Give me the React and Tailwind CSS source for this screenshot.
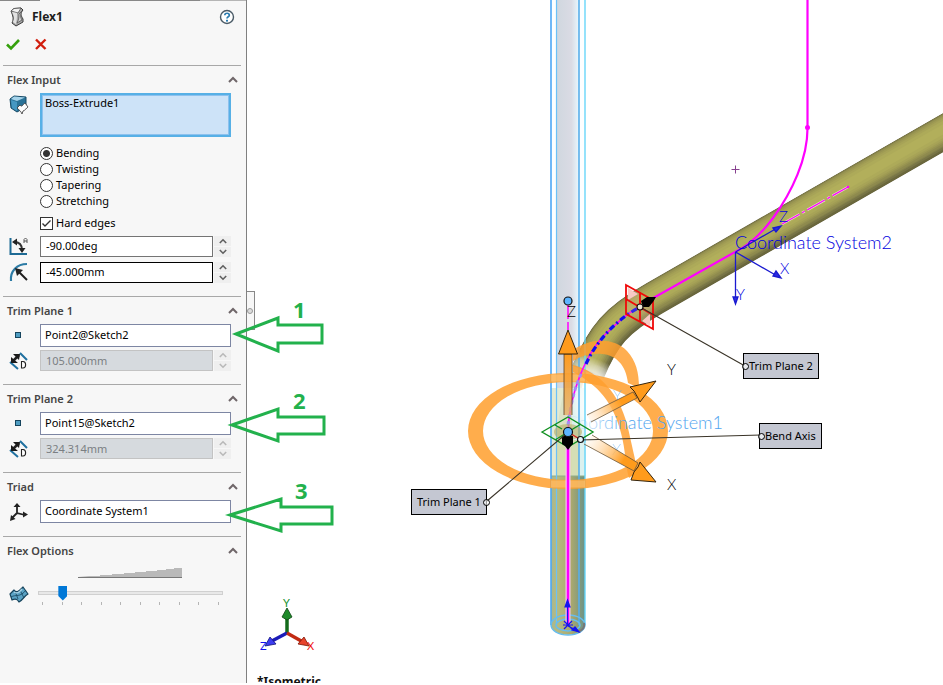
import { useState } from 'react';

const Chevron = ({ className = '', down = false }) => (
    <svg viewBox="0 0 10 7" className={className} fill="none" stroke="currentColor" strokeWidth="2">
        <path d={down ? 'M1 1 L5 5 L9 1' : 'M1 6 L5 2 L9 6'} />
    </svg>
);

const FlexIcon = () => (
    <svg viewBox="0 0 16 20" className="w-4 h-5" strokeLinejoin="round">
        <path d="M2 4 L5 1.500 L12 1 L14 3 C11 6 12 9 14 12 L14 15 L7 19 L3 16 C5 12 4 9 2 4Z" fill="#a9a9a9" stroke="#3a3a3a" />
        <path d="M2 4 L5 1.500 L12 1 L9 6Z" fill="#f2f2f2" stroke="#555" strokeWidth="0.8" />
        <path d="M3 5 L8 6 C8 9 8 12 7 17 L4 15 C6 11 5 9 3 5Z" fill="#e2e2e2" />
        <path d="M10 7 L13 4 C11 7 11 10 13 13 L8 16 C10 12 10 10 10 7Z" fill="#cfcfcf" stroke="#555" strokeWidth="0.8" />
    </svg>
);

const HelpIcon = () => (
    <svg viewBox="0 0 16 16" className="w-4 h-4" fill="none">
        <circle cx="8" cy="8" r="6.5" fill="#fff" stroke="#4a5a66" strokeWidth="1.4" />
        <path d="M5.8 6.2 C5.8 3.6 10.3 3.6 10.3 6.2 C10.3 7.8 8 7.8 8 9.6" stroke="#2b7cb0" strokeWidth="1.7" />
        <rect x="7" y="10.8" width="2" height="1.8" fill="#2b7cb0" />
    </svg>
);

const BodyIcon = () => (
    <svg viewBox="0 0 20 20" className="w-5 h-5 mt-0.5" strokeLinejoin="round">
        <path d="M1 4 L5 1 L17 2 L17 12 L8 17 L2 13Z" fill="#2a7398" stroke="#174a66" />
        <path d="M2 4 L5 1.500 L16 2.500 L8 6Z" fill="#a5d3ea" />
        <path d="M2 5 L8 7 L8 16 L3 13Z" fill="#4698c2" />
        <path d="M8 13 L11 10 C13 13 14 9 16 8 L19 12 C17 13 17 15 14 16 L13 19 C12 16 10 15 8 13Z" fill="#fff" stroke="#333" strokeWidth="0.8" />
    </svg>
);

const AngleIcon = () => (
    <svg viewBox="0 0 20 20" className="w-5 h-5" fill="none">
        <path d="M1.5 2 V18 H18" stroke="#1d6a94" strokeWidth="2" />
        <path d="M5 6 C10 6 13 9 13 14" stroke="#333" strokeWidth="2" />
        <path d="M3 6 L8 2.5 L8 9.5Z M9.5 12 L16.5 12 L13 17Z" fill="#222" />
        <path d="M15 7 V3.5 L16.5 2 L18 3.5 V7 M15 5 H18" stroke="#555" />
    </svg>
);

const RadiusIcon = () => (
    <svg viewBox="0 0 20 20" className="w-5 h-5" fill="none">
        <path d="M2 19 C1 9 8 2 18 2" stroke="#2c7ba5" strokeWidth="2.2" />
        <path d="M10 10 L18 18" stroke="#1c1c1c" strokeWidth="2" />
        <path d="M6 6 L14 8 L8 14Z" fill="#222" />
    </svg>
);

const PointIcon = () => (
    <svg viewBox="0 0 20 20" className="w-5 h-5">
        <rect x="6.500" y="8.500" width="5" height="5" fill="#4f9dc2" stroke="#16445d" />
    </svg>
);

const DistanceIcon = () => (
    <svg viewBox="0 0 20 20" className="w-5 h-5 mt-px" fill="none">
        <path d="M11 2 L18 9 M1 11 L9 18" stroke="#2071a0" strokeWidth="2" />
        <path d="M4 10 L10 4" stroke="#222" strokeWidth="2.5" />
        <path d="M4 3 L11 3 L10 9Z M2 6 L9 12 L2 12Z" fill="#1b1b1b" />
        <path d="M12.500 10.500 H14 C17.500 10.500 17.500 17 14 17 H12.500Z" fill="#fff" stroke="#222" strokeWidth="1.1" />
    </svg>
);

const TriadIcon = () => (
    <svg viewBox="0 0 20 20" className="w-5 h-5 mt-0.5" fill="none">
        <path d="M8 3 V11 L16 13 M8 11 L3 16" stroke="#222" strokeWidth="1.8" />
        <path d="M4.500 5 L8 1 L11.500 5Z M14 9.500 L19 12.500 L14 15.500Z M1 19 L2 13 L6.500 17Z" fill="#222" />
    </svg>
);

const MeshIcon = () => (
    <svg viewBox="0 0 20 20" className="w-5 h-5" strokeLinejoin="round">
        <path d="M1 9 L5 5 C8 9 11 5 14 2 L19 9 C15 11 14 15 10 17 C8 13 5 14 3 15Z" fill="#5ba3c5" stroke="#17445c" strokeWidth="1.2" />
        <path d="M2 12 C7 9 11 13 17 5 M6 6 L9 14 M11 5 L15 13" fill="none" stroke="#17445c" strokeWidth="0.8" />
        <path d="M5 7 C8 9 10 8 13 4" fill="none" stroke="#a6d2e6" strokeWidth="1.5" />
    </svg>
);

const Section = ({ title, children }) => {
    const [open, setOpen] = useState(true);
    return (
        <section className="ml-[3px] mr-[5px] border-t border-[#a8a8a8] pb-[13px]">
            <button
                type="button"
                onClick={() => setOpen(!open)}
                className="w-full h-[27px] pl-1 pr-[3px] flex items-center justify-between font-semibold text-[#454545]"
            >
                <span>{title}</span>
                <Chevron className="w-[10px] h-[7px] text-[#6f6669]" down={!open} />
            </button>
            {open && children}
        </section>
    );
};

const Row = ({ icon, children }) => (
    <div className="flex pr-[10px]">
        <div className="w-[37px] shrink-0 pl-[6px]">{icon}</div>
        <div className="flex-1 min-w-0 flex">{children}</div>
    </div>
);

const Picker = ({ label, value }) => (
    <input
        aria-label={label}
        defaultValue={value}
        className="flex-1 min-w-0 h-[23px] px-1 pb-0.5 bg-white border border-[#7d86a3] text-black outline-none"
    />
);

const Spinner = ({ label, value, disabled, strong }) => (
    <>
        <input
            aria-label={label}
            defaultValue={value}
            disabled={disabled}
            className={`flex-1 min-w-0 h-[21px] px-[5px] border outline-none ${
                disabled
                    ? 'bg-[#d6dade] border-[#c3c3c3] text-[#7b7f83]'
                    : strong
                      ? 'bg-white border-black text-black pb-0.5'
                      : 'bg-white border-[#747474] text-black pb-0.5'
            }`}
        />
        <div className={`ml-px w-[17px] flex flex-col gap-px ${disabled ? 'text-[#b9b9b9]' : 'text-[#606060]'}`}>
            <button type="button" disabled={disabled} aria-label={`Increase ${label}`} className="h-[10px] bg-[#efefef] flex items-center justify-center">
                <Chevron className="w-2 h-[6px]" />
            </button>
            <button type="button" disabled={disabled} aria-label={`Decrease ${label}`} className="h-[10px] bg-[#efefef] flex items-center justify-center">
                <Chevron className="w-2 h-[6px]" down />
            </button>
        </div>
    </>
);

const TrimPlane = ({ title, point, distance }) => (
    <Section title={title}>
        <div className="flex flex-col gap-[3px]">
            <Row icon={<PointIcon />}>
                <Picker label={`${title} reference`} value={point} />
            </Row>
            <Row icon={<DistanceIcon />}>
                <Spinner label={`${title} distance`} value={distance} disabled />
            </Row>
        </div>
    </Section>
);

const modes = ['Bending', 'Twisting', 'Tapering', 'Stretching'];

const PropertyPanel = () => {
    const [mode, setMode] = useState('Bending');
    return (
        <aside className="w-[247px] shrink-0 bg-[#f7f7f7] border-r border-[#808080] text-[11px] leading-4">
            <div className="flex h-px">
                <div className="w-10 bg-[#888]" />
                <div className="w-[39px]" />
                <div className="w-[121px] bg-[#888]" />
                <div className="flex-1 bg-[#b5b5b5]" />
            </div>
            <header className="h-16 pl-[9px] pr-[11px] pt-1.5">
                <div className="flex items-center h-5">
                    <FlexIcon />
                    <h1 className="ml-[7px] flex-1 text-[12px] font-bold text-[#1e1e1e]">Flex1</h1>
                    <button type="button" aria-label="Help">
                        <HelpIcon />
                    </button>
                </div>
                <div className="flex items-center gap-3 mt-[9px] -ml-1">
                    <button type="button" aria-label="OK">
                        <svg viewBox="0 0 16 16" className="w-4 h-4" fill="none" stroke="#35a00c" strokeWidth="2.6">
                            <path d="M2 8.5 L6 12.5 L14 4" />
                        </svg>
                    </button>
                    <button type="button" aria-label="Cancel">
                        <svg viewBox="0 0 16 16" className="w-4 h-4" fill="none" stroke="#d11e0e" strokeWidth="2.4">
                            <path d="M3 3.5 L12.5 13 M12.5 3.5 L3 13" />
                        </svg>
                    </button>
                </div>
            </header>

            <Section title="Flex Input">
                <Row icon={<BodyIcon />}>
                    <div className="flex-1 h-11 px-[3px] bg-[#cde3f8] border-2 border-[#57b0e6] shadow-[inset_0_0_0_1px_#8dc1ee] text-black">
                        Boss-Extrude1
                    </div>
                </Row>
                <fieldset className="pl-[37px] pt-2">
                    {modes.map((m) => (
                        <label key={m} className="flex items-center gap-[3px] h-4 text-black">
                            <input
                                type="radio"
                                name="mode"
                                checked={mode === m}
                                onChange={() => setMode(m)}
                                className="appearance-none w-[13px] h-[13px] rounded-full border border-[#333] bg-white checked:bg-[radial-gradient(circle,#333_0,#333_3px,#fff_4px)]"
                            />
                            {m}
                        </label>
                    ))}
                    <label className="relative mt-1.5 flex items-center gap-[3px] h-4 text-black">
                        <input type="checkbox" defaultChecked className="peer appearance-none w-[13px] h-[13px] border border-[#333] bg-white" />
                        <svg viewBox="0 0 13 13" className="absolute left-0 w-[13px] h-[13px] hidden peer-checked:block" fill="none" stroke="#333" strokeWidth="1.4">
                            <path d="M2.5 6.5 L5 9 L10.5 3.5" />
                        </svg>
                        Hard edges
                    </label>
                </fieldset>
                <div className="pt-[5px] flex flex-col gap-[5px]">
                    <Row icon={<AngleIcon />}>
                        <Spinner label="Bend angle" value="-90.00deg" />
                    </Row>
                    <Row icon={<RadiusIcon />}>
                        <Spinner label="Bend radius" value="-45.000mm" strong />
                    </Row>
                </div>
            </Section>

            <TrimPlane title="Trim Plane 1" point="Point2@Sketch2" distance="105.000mm" />
            <TrimPlane title="Trim Plane 2" point="Point15@Sketch2" distance="324.314mm" />

            <Section title="Triad">
                <Row icon={<TriadIcon />}>
                    <Picker label="Triad coordinate system" value="Coordinate System1" />
                </Row>
            </Section>

            <Section title="Flex Options">
                <div className="pl-[75px] pt-[3px]">
                    <svg viewBox="0 0 104 11" className="block w-[104px] h-[11px]">
                        <path d="M0 10 L11 9 H22 V8 H34 V7 H46 V6 H57 V5 H68 V4 H79 V3 H88 V2 H96 V1 H104 V10Z" fill="#b9b9b9" />
                        <path d="M0 10.5 H104" stroke="#777" />
                    </svg>
                </div>
                <div className="flex pt-[7px]">
                    <div className="w-[35px] shrink-0 pl-[6px]">
                        <MeshIcon />
                    </div>
                    <div className="flex-1 pr-[18px]">
                        <input
                            type="range"
                            aria-label="Flex accuracy"
                            min="0"
                            max="9"
                            defaultValue="1"
                            className="block appearance-none w-full h-[15px] bg-transparent [&::-webkit-slider-runnable-track]:h-1 [&::-webkit-slider-runnable-track]:border [&::-webkit-slider-runnable-track]:border-[#d0d0d0] [&::-webkit-slider-runnable-track]:bg-[#e8e8e8] [&::-webkit-slider-thumb]:appearance-none [&::-webkit-slider-thumb]:w-[9px] [&::-webkit-slider-thumb]:h-[15px] [&::-webkit-slider-thumb]:-mt-[6px] [&::-webkit-slider-thumb]:bg-[#0078d7] [&::-webkit-slider-thumb]:[clip-path:polygon(0_0,100%_0,100%_70%,50%_100%,0_70%)]"
                        />
                        <div className="flex justify-between px-1 pt-0.5">
                            {Array.from({ length: 10 }, (_, i) => (
                                <span key={i} className="w-px h-[3px] bg-[#b5b5b5]" />
                            ))}
                        </div>
                    </div>
                </div>
            </Section>
        </aside>
    );
};

// centre line of the bent body
const pipePath = 'M960 123 L655 298 C616 320 603 336 588 372';

// outer to inner: width, shift across the pipe, colour
const pipeShades = [
    [34, 0, '#625f38'],
    [33, 0, '#6b683d'],
    [31, 1, '#787546'],
    [29, 2, '#85824b'],
    [27, 2, '#8e8a4e'],
    [25, 3, '#979351'],
    [22, 3, '#a09c54'],
    [19, 3, '#a7a357'],
    [15, 3, '#adaa59'],
    [9, 3, '#b2af5b'],
];

const Scene = () => (
    <svg viewBox="247 0 696 683" className="block w-[696px] h-[683px] max-w-none" fill="none">
        <defs>
            <linearGradient id="ghost">
                <stop offset="0" stopColor="#d0d7df" />
                <stop offset="0.65" stopColor="#dadbe4" />
                <stop offset="1" stopColor="#e8f8ff" />
            </linearGradient>
            <linearGradient id="lowerTube">
                <stop offset="0" stopColor="#a9b78f" />
                <stop offset="0.2" stopColor="#b6ba80" />
                <stop offset="0.6" stopColor="#aaa96e" />
                <stop offset="0.8" stopColor="#8b9c79" />
                <stop offset="1" stopColor="#68938a" />
            </linearGradient>
            <linearGradient id="pipeFade" gradientUnits="userSpaceOnUse" x1="600" y1="360" x2="590" y2="385">
                <stop offset="0" stopColor="#fff" />
                <stop offset="0.25" stopColor="#999" />
                <stop offset="1" stopColor="#222" />
            </linearGradient>
            <mask id="pipeMask" maskUnits="userSpaceOnUse" x="540" y="0" width="420" height="420">
                <rect x="540" y="0" width="420" height="420" fill="url(#pipeFade)" />
            </mask>
            <linearGradient id="shaftZ" gradientUnits="userSpaceOnUse" x1="0" y1="354" x2="0" y2="415">
                <stop offset="0" stopColor="#ff9b1c" />
                <stop offset="1" stopColor="#e8a75c" stopOpacity="0.7" />
            </linearGradient>
            <linearGradient id="shaftY" gradientUnits="userSpaceOnUse" x1="582" y1="421" x2="620" y2="400">
                <stop offset="0" stopColor="#fff" stopOpacity="0.3" />
                <stop offset="1" stopColor="#ff9b1c" />
            </linearGradient>
            <linearGradient id="shaftX" gradientUnits="userSpaceOnUse" x1="582" y1="439" x2="622" y2="463">
                <stop offset="0" stopColor="#fff" stopOpacity="0.3" />
                <stop offset="1" stopColor="#ff9b1c" />
            </linearGradient>
            <radialGradient id="glow">
                <stop offset="0" stopColor="#fff" stopOpacity="0.95" />
                <stop offset="0.6" stopColor="#fff" stopOpacity="0.7" />
                <stop offset="1" stopColor="#fff" stopOpacity="0" />
            </radialGradient>
            <linearGradient id="label1" gradientUnits="userSpaceOnUse" x1="575" y1="0" x2="625" y2="0">
                <stop offset="0" stopColor="#6db4f0" stopOpacity="0.1" />
                <stop offset="1" stopColor="#4fa3ee" />
            </linearGradient>
        </defs>

        {/* straight ghost of the body */}
        <rect x="551" y="0" width="34" height="388" fill="#fcfeff" />
        <rect x="557" y="0" width="22" height="388" fill="url(#ghost)" />

        {/* bent body */}
        <g mask="url(#pipeMask)">
            {pipeShades.map(([w, s, c]) => (
                <path key={w} d={pipePath} stroke={c} strokeWidth={w} transform={`translate(${-s * 0.5} ${-s * 0.85})`} />
            ))}
        </g>
        <path d="M574 362 L584 378 L572 440 L557 440 C558 410 564 385 574 362Z" fill="#bcbb86" opacity="0.45" />

        {/* lower leg */}
        <rect x="551" y="388" width="34" height="88" fill="#d9e3c4" opacity="0.75" />
        <rect x="572" y="388" width="14" height="88" fill="#d8f2f6" opacity="0.8" />
        <rect x="557" y="440" width="22" height="36" fill="#d3d9a6" opacity="0.8" />
        <path d="M551 476 H585 V625 C585 638 551 638 551 625Z" fill="url(#lowerTube)" />
        <ellipse cx="594" cy="402" rx="24" ry="38" fill="url(#glow)" />
        <path d="M551 476 H585" stroke="#8fae8a" />

        {/* edges of the ghost */}
        <path d="M551 0 V625" stroke="#4ba6f5" strokeWidth="1.6" />
        <path d="M556.500 0 V625" stroke="#6cc1f7" strokeWidth="1.2" />
        <path d="M579 0 V625" stroke="#57aeea" strokeWidth="1.6" />
        <path d="M585 0 V625" stroke="#67d6fa" strokeWidth="1.4" />
        <g stroke="#66bdf0" strokeWidth="1.4">
            <ellipse cx="568" cy="625" rx="17" ry="10" />
            <ellipse cx="568" cy="625" rx="12" ry="6" />
        </g>
        <path d="M578 632 C583 630 585 627 584 623" stroke="#777" strokeWidth="2" />

        {/* rotation rings */}
        <path
            fillRule="evenodd"
            fill="#ff9f2e"
            fillOpacity="0.86"
            d="M468 431 A100 58 0 0 1 668 431 A100 58 0 0 1 468 431Z M483 431 A85 49 0 0 0 653 431 A85 49 0 0 0 483 431Z"
        />
        <path d="M551 378 H585 M551 484 H585" stroke="#ffd08a" strokeWidth="7" opacity="0.45" />
        <path d="M573 350 C590 338 614 337 627 351 C636 361 639 372 639 388 L628 383 C626 365 616 355 602 354 C590 353 581 356 573 361Z" fill="#ff9f2e" fillOpacity="0.84" />
        <path d="M573 365 C600 372 619 394 627 424 C632 445 635 460 638 472 L629 478 C625 464 626 452 621 433 C613 402 598 385 573 372Z" fill="#ff9f2e" fillOpacity="0.84" />

        {/* sketch curves */}
        <g stroke="#ff00ff">
            <path d="M568 439 V625" strokeWidth="5" stroke="#f4c8ef" />
            <path d="M568 439 V625" strokeWidth="2.5" />
            <path d="M568 305 V330" strokeWidth="1.5" strokeDasharray="14 3" />
            <path d="M568 432 C569 395 586 350 610 330 C620 320 630 311 640 307" strokeWidth="1.6" />
            <path d="M807.500 0 V127 C808 158 792 192 773 218 C762 233 748 246 735 252 L648 301" strokeWidth="2.2" />
            <path d="M782 224 L848 187" stroke="#fff" strokeWidth="2.5" opacity="0.7" strokeDasharray="20 3 3 3" />
            <path d="M782 224 L848 187" strokeWidth="1.3" strokeDasharray="20 3 3 3" />
            <path d="M731.500 169.500 H739.500 M735.500 165.500 V173.500" stroke="#87408f" />
        </g>
        <path d="M568 425 C571 400 577 380 583 371" stroke="#a48cf2" strokeWidth="3" strokeDasharray="4 3" />
        <path d="M586 364 C594 346 612 322 640 307" stroke="#1010f0" strokeWidth="3.2" strokeDasharray="6 3 2 3" />
        <circle cx="807.500" cy="127.500" r="2.500" fill="#f0f" />
        <circle cx="848" cy="187" r="1.300" fill="#f0f" />

        {/* second coordinate system */}
        <g stroke="#1a1ad0" strokeWidth="1.3" fill="#2b2be0">
            <path d="M735.500 252 V302 M735.500 252 L779 277 M735.500 252 L779 227" />
            <path d="M733 297 H738 L735.500 304Z M773 276 L776 271 L781 278Z M773 228 L776 232 L781 226Z" />
        </g>
        <g fill="#0000e0" className="font-['Lato'] font-light text-[15px]">
            <text x="779" y="222">Z</text>
            <text x="780" y="274">X</text>
            <text x="736" y="300">Y</text>
            <text x="735" y="249" className="text-[18px]">Coordinate System2</text>
        </g>
        <g fill="url(#label1)" className="font-['Lato'] font-light text-[15px]">
            <text x="566" y="429" className="text-[18px]">Coordinate System1</text>
            <text x="613" y="401" opacity="0.6">Y</text>
            <text x="612" y="455" opacity="0.6">X</text>
        </g>

        {/* triad arrows */}
        <path d="M564 415 V354 H572 V415" fill="url(#shaftZ)" stroke="#5a4326" strokeWidth="0.8" />
        <path d="M568 330 L577.500 354 H558.500Z" fill="#ff9b1c" stroke="#33230c" />
        <path d="M587 415 L633 392 L637 398 L591 422" fill="url(#shaftY)" stroke="#6b5538" strokeWidth="0.8" />
        <path d="M656 381 L630 387 L634 391 L638 398 L640 402Z" fill="#ff9b1c" stroke="#33230c" />
        <path d="M592 435 L638 463 L634 471 L584 444" fill="url(#shaftX)" stroke="#6b5538" strokeWidth="0.8" />
        <path d="M656 482 L640 462 L638 467 L634 472 L631 480Z" fill="#ff9b1c" stroke="#33230c" />

        {/* trim plane 1 marker */}
        <ellipse cx="568" cy="432" rx="14" ry="8" fill="#b5ab5e" fillOpacity="0.6" />
        <g stroke="#109020" strokeWidth="1.4">
            <path d="M542 432 L568 417 L593 432 L568 447Z M555 425 L562 429 M555 440 L581 424" />
            <path d="M568 432 L581 440" stroke="#d02020" />
        </g>
        <path d="M562 436 H573 V444 L571 446 L568 450 L565 446 L562 444Z" fill="#000" />

        {/* trim plane 2 marker */}
        <path d="M626 285 L653 300 V329 L626 314Z" fill="#f6b4b4" fillOpacity="0.15" />
        <path d="M628 288 L638 294 L628 300Z M650 314 V326 L642 321Z" fill="#f7c9c4" />
        <path d="M626 285 L653 300 V329 L626 314Z M640 292 V322 M626 299 L653 315" stroke="#f00808" strokeWidth="1.8" />
        <path d="M641 301 L647 297 L656 297 L653 302 L649 307 L643 307Z" fill="#000" />

        {/* leaders */}
        <path d="M640 307 L745 366 M580 440 L761 435 M567 433 L487 501" stroke="#3a3428" strokeWidth="1.1" />
        <g stroke="#111" strokeWidth="1.2">
            <circle cx="568" cy="301" r="4" fill="#5cb4ff" />
            <circle cx="568" cy="432" r="4.500" fill="#5cb4ff" />
            <circle cx="580.500" cy="439.500" r="3" fill="#e8f7fb" />
            <circle cx="640" cy="307" r="3" fill="#ece8d8" />
        </g>
        <g fill="#000" className="font-['Lato'] font-light text-[15px]">
            <text x="567" y="317">Z</text>
            <text x="667" y="375">Y</text>
            <text x="667" y="490">X</text>
        </g>

        {/* origin */}
        <g stroke="#1414f0" strokeWidth="1.2">
            <path d="M567.500 625 V604 M563 625 H573 M564 621 L572 629 M572 621 L564 629 M568 626 L578 631" />
            <path d="M565 607 L567.500 600 L570 607Z M572 630 L575 627 L579 632Z" fill="#1414f0" />
        </g>

        {/* view orientation triad */}
        <g strokeWidth="3.5">
            <path d="M287 633 V615" stroke="#146b1b" />
            <path d="M287 633 L270 642" stroke="#1c1cb8" />
            <path d="M287 633 L303 642" stroke="#c22a12" />
        </g>
        <g strokeWidth="0.8">
            <path d="M287 608 L292 617 L287 620 L282 617Z" fill="#1f8a2a" stroke="#0c4412" />
            <path d="M265 646 L270 637 L276 644Z" fill="#3c3cf0" stroke="#10107a" />
            <path d="M309 646 L304 637 L298 644Z" fill="#e8432a" stroke="#7c1405" />
        </g>
        <g className="font-['Lato'] text-[11px]">
            <text x="283" y="607" fill="#12902a">Y</text>
            <text x="260" y="650" fill="#1212f0">Z</text>
            <text x="307" y="650" fill="#f01212">X</text>
        </g>
        <text x="257" y="686" fill="#111" className="font-bold text-[12px]">*Isometric</text>
    </svg>
);

const callouts = [
    { text: 'Trim Plane 2', place: 'left-[496px] top-[353px]', node: '-left-0.5' },
    { text: 'Bend Axis', place: 'left-[512px] top-[423px]', node: '-left-0.5' },
    { text: 'Trim Plane 1', place: 'left-[164px] top-[489px]', node: '-right-1' },
];

const Viewport = () => (
    <main className="relative flex-1 min-w-0 overflow-hidden bg-white">
        <Scene />
        {callouts.map((c) => (
            <button
                key={c.text}
                type="button"
                className={`absolute ${c.place} h-[26px] px-[5px] border border-black bg-[#c4c7d2] text-[11px] text-black whitespace-nowrap`}
            >
                {c.text}
                <span className={`absolute top-[9px] w-[7px] h-[7px] rounded-full border border-black bg-white/60 ${c.node}`} />
            </button>
        ))}
        <button
            type="button"
            aria-label="Collapse panel"
            className="absolute left-0 top-[291px] w-2 h-[39px] border border-l-0 border-[#888] bg-[#f7f7f7]"
        >
            <span className="absolute left-0 top-4 w-[6px] h-[6px] rounded-full border border-[#999] bg-[#ddd]" />
        </button>
    </main>
);

// numbered pointers over the panel and the viewport
const steps = [
    { n: 1, x: 293, y: 318, d: 'M236 334 L278 318 V325 H322 V343 H278 V351Z' },
    { n: 2, x: 293, y: 409, d: 'M232 425 L278 409 V417 H324 V434 H278 V441Z' },
    { n: 3, x: 295, y: 499, d: 'M230 515 L281 499 V507 H332 V524 H281 V531Z' },
];

const Steps = () => (
    <svg viewBox="0 0 400 683" className="absolute left-0 top-0 w-[400px] h-[683px] pointer-events-none" fill="none">
        {steps.map((s) => (
            <g key={s.n}>
                <path d={s.d} stroke="#22b14c" strokeWidth="3" />
                <text x={s.x} y={s.y} fill="#22b14c" className="font-bold text-[22px]">{s.n}</text>
            </g>
        ))}
    </svg>
);

const App = () => (
    <div className="relative h-screen pb-0.5 overflow-hidden bg-white flex font-['Noto_Sans','Open_Sans',sans-serif]">
        <PropertyPanel />
        <Viewport />
        <Steps />
    </div>
);

export default App;
